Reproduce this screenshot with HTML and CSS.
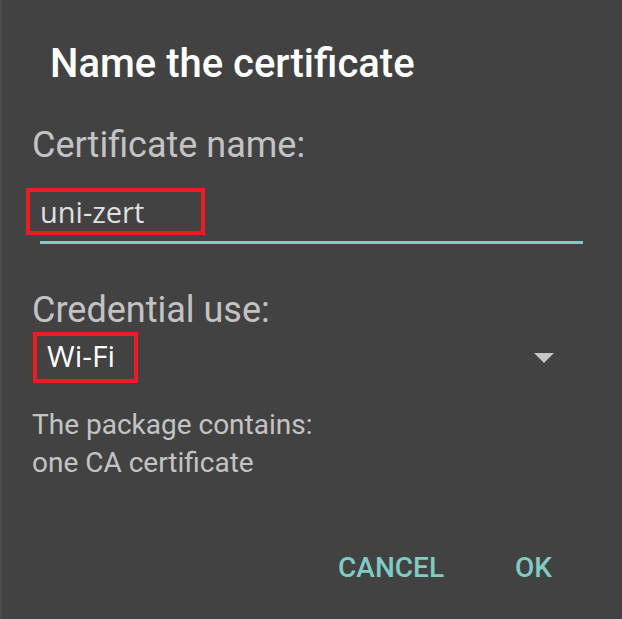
FILE: index.html
```html
<!DOCTYPE html>
<html lang="en">
<head>
    <meta charset="UTF-8">
    <meta name="viewport" content="width=device-width, initial-scale=1.0">
    <title>Name the certificate</title>
    <link rel="stylesheet" href="styles.css">
</head>
<body>

<div class="edge"></div>

<div class="dialog">
    <h1 class="dialog-title">Name the certificate</h1>

    <!-- Name field -->
    <div class="field-label">Certificate name:</div>
    <div class="mark mark-name">uni-zert</div>
    <div class="field-line"></div>

    <!-- Usage spinner -->
    <div class="field-label label-use">Credential use:</div>
    <div class="spinner">
        <div class="mark mark-use">Wi-Fi</div>
        <span class="spinner-arrow"></span>
    </div>

    <p class="package-info">The package contains:<br>one CA certificate</p>

    <div class="actions">
        <button class="action-button">CANCEL</button>
        <button class="action-button">OK</button>
    </div>
</div>

</body>
</html>
```

FILE: styles.css
```css
* {
    margin: 0;
    padding: 0;
    box-sizing: border-box;
}

body {
    font-family: Roboto, "Noto Sans", sans-serif;
    background-color: #424242;
    display: flex;
    height: 100vh;
    overflow: hidden;
}

.edge {
    width: 2px;
    background-color: #4b4b4b;
}

.dialog {
    flex: 1;
    padding: 40px 39px 0 30px;
}

.dialog-title {
    margin-left: 18px;
    font-size: 40px;
    font-weight: 500;
    line-height: 48px;
    color: #ffffff;
}

.field-label {
    margin-top: 36px;
    font-size: 36px;
    line-height: 42px;
    color: rgba(255, 255, 255, 0.7);
}

.label-use {
    margin-top: 45px;
}

/* Red boxes drawn over the screenshot */
.mark {
    border: 4px solid #ed1c24;
    padding-left: 10px;
    font-family: "Open Sans", sans-serif;
    font-size: 29px;
    line-height: 39px;
}

.mark-name {
    width: 179px;
    margin-top: 22px;
    margin-left: -6px;
    color: #e0e0e0;
}

.mark-use {
    width: 105px;
    margin-left: 1px;
    padding-bottom: 4px;
    font-size: 30px;
    color: #ffffff;
}

.field-line {
    height: 3px;
    margin: 6px 0 0 8px;
    background-color: #80cbc4;
}

.spinner {
    margin-top: 1px;
    display: flex;
    justify-content: space-between;
    align-items: center;
}

.spinner-arrow {
    width: 0;
    height: 0;
    margin-right: 29px;
    border-left: 10px solid transparent;
    border-right: 10px solid transparent;
    border-top: 10px solid #c6c6c6;
}

.package-info {
    margin-top: 23px;
    font-size: 28px;
    line-height: 38px;
    color: rgba(255, 255, 255, 0.7);
}

.actions {
    margin-top: 67px;
    margin-right: 31px;
    display: flex;
    justify-content: flex-end;
    gap: 71px;
}

.action-button {
    background: none;
    border: none;
    font-family: Roboto, sans-serif;
    font-size: 28px;
    font-weight: 500;
    line-height: 38px;
    color: #80cbc4;
    cursor: pointer;
}
```
